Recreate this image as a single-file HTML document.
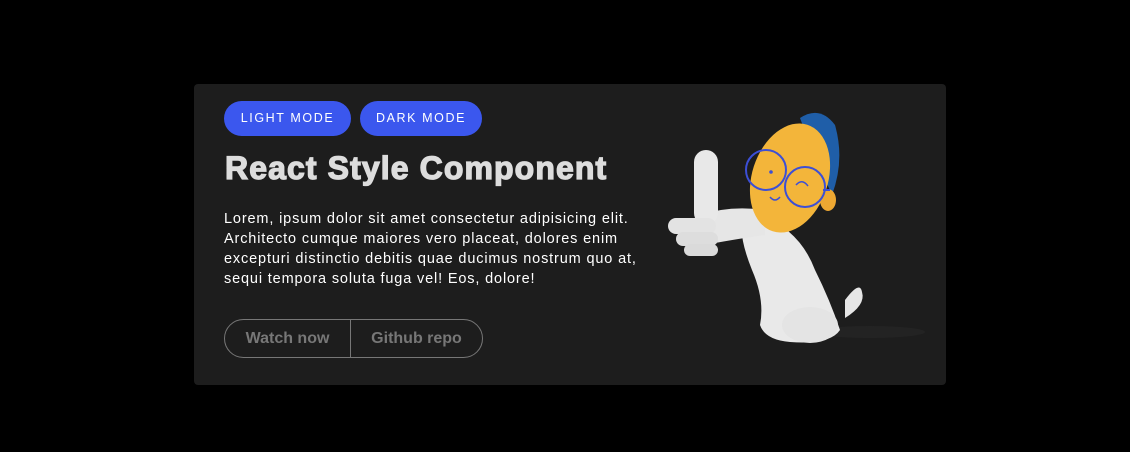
<!DOCTYPE html>
<html><head><style>
body{margin:0;background:#000;width:1130px;height:452px;position:relative;font-family:"Liberation Sans",Arial,sans-serif;overflow:hidden}
.card{position:absolute;left:194px;top:84px;width:752px;height:301px;background:#1d1d1d;border-radius:4px}
.pill{position:absolute;top:17px;height:35px;border-radius:18px;background:#3b57ee;color:#fff;font-size:12.5px;letter-spacing:1.6px;line-height:35px;text-align:center}
h1{position:absolute;left:31px;top:66px;margin:0;font-size:32px;font-weight:900;color:#ddd;letter-spacing:1.1px;-webkit-text-stroke:1.3px #ddd;white-space:nowrap}
p{position:absolute;left:30px;top:125px;margin:0;width:440px;color:#fff;font-size:14.5px;line-height:20px;letter-spacing:0.85px}
.btns{position:absolute;left:30px;top:235px;width:257px;height:37px;border:1.5px solid #777;border-radius:20px;display:flex;color:#777;font-weight:bold;font-size:16px}
.btns div{line-height:37px;text-align:center}
</style></head><body>
<div class="card">
<div class="pill" style="left:30px;width:127px">LIGHT MODE</div>
<div class="pill" style="left:166px;width:122px">DARK MODE</div>
<h1>React Style Component</h1>
<p>Lorem, ipsum dolor sit amet consectetur adipisicing elit. Architecto cumque maiores vero placeat, dolores enim excepturi distinctio debitis quae ducimus nostrum quo at, sequi tempora soluta fuga vel! Eos, dolore!</p>
<div class="btns"><div style="width:125px;border-right:1.5px solid #777">Watch now</div><div style="flex:1">Github repo</div></div>
</div>
<svg style="position:absolute;left:0;top:0" width="1130" height="452">
<ellipse cx="870" cy="332" rx="55" ry="6" fill="#262626" opacity="0.7"/>
<path d="M845 300 Q860 280 862 292 Q866 305 845 318 Z" fill="#e6e6e6"/>
<path d="M760 215 Q800 230 815 270 Q830 300 840 330 Q830 345 790 342 Q765 340 760 325 Q765 300 752 270 Q740 240 742 225 Z" fill="#e9e9e9"/>
<ellipse cx="810" cy="325" rx="28" ry="18" fill="#e4e4e4"/>
<path d="M700 215 Q730 205 765 210 L765 235 Q730 240 705 245 Z" fill="#e6e6e6"/>
<rect x="694" y="150" width="24" height="75" rx="12" fill="#e8e8e8"/>
<rect x="668" y="218" width="48" height="16" rx="8" fill="#e3e3e3"/>
<rect x="676" y="232" width="42" height="14" rx="7" fill="#ddd"/>
<rect x="684" y="244" width="34" height="12" rx="6" fill="#dadada"/>
<path d="M800 118 Q820 105 835 125 Q845 160 832 195 L812 150 Z" fill="#1f5ea8"/>
<ellipse cx="790" cy="178" rx="38" ry="56" transform="rotate(18 790 178)" fill="#f3b53a"/>
<ellipse cx="828" cy="200" rx="8" ry="11" fill="#eea832"/>
<circle cx="766" cy="170" r="20" fill="none" stroke="#3c4fd6" stroke-width="2"/>
<circle cx="805" cy="187" r="20" fill="none" stroke="#3c4fd6" stroke-width="2"/>
<path d="M823 190 L830 190" stroke="#3c4fd6" stroke-width="2"/>
<path d="M770 197 Q775 203 780 197" stroke="#3c4fd6" fill="none" stroke-width="1.5"/>
<circle cx="771" cy="172" r="1.8" fill="#3c4fd6"/>
<path d="M796 185 Q802 178 808 186" stroke="#3c4fd6" fill="none" stroke-width="1.5"/>
</svg>
</body></html>
